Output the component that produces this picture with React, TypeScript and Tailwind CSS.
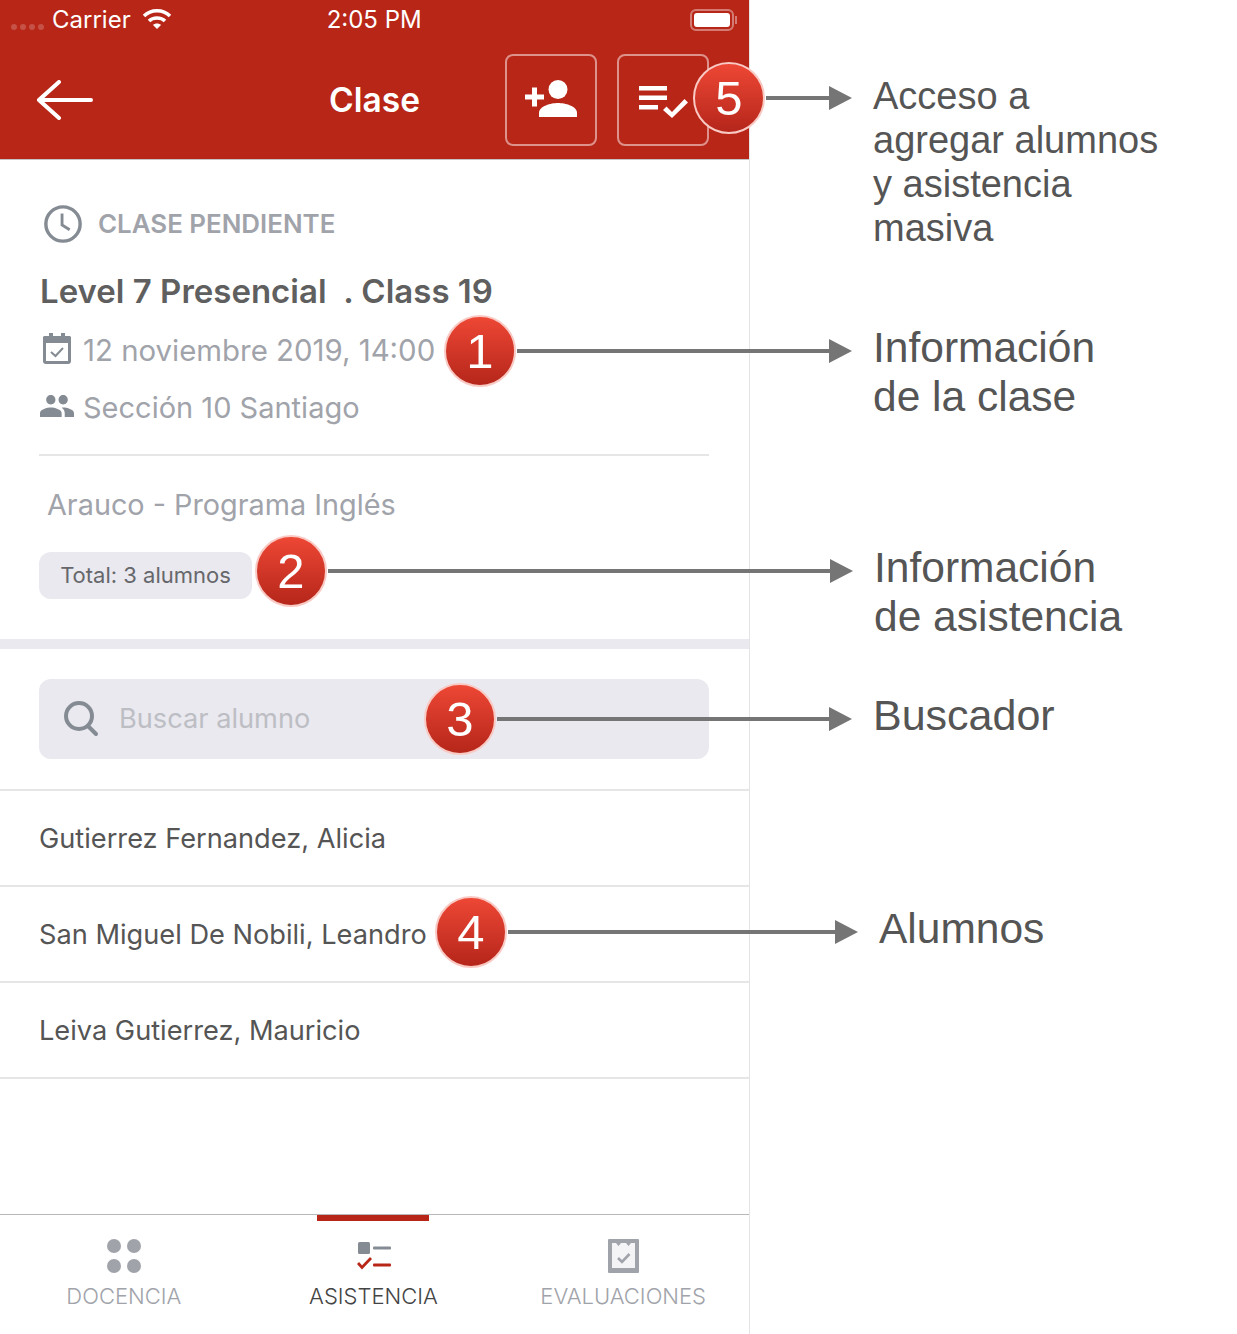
const APP_FONT = "font-['Inter','Liberation_Sans',sans-serif]";

const Badge = ({ n, className }: { n: number; className: string }) => (
  <div
    className={`absolute flex h-[72px] w-[72px] items-center justify-center rounded-full border-2 border-[#f9c9c4] bg-gradient-to-b from-[#ee4735] to-[#b5261a] font-['Liberation_Sans',sans-serif] text-[49px] leading-none text-white ${className}`}
  >
    {n}
  </div>
);

const Arrow = ({ className }: { className: string }) => (
  <div className={`absolute flex h-6 items-center ${className}`}>
    <div className="h-1 flex-1 bg-[#757575]" />
    <svg width="23" height="24" viewBox="0 0 23 24" className="shrink-0">
      <path d="M0 0 L23 12 L0 24 Z" fill="#757575" />
    </svg>
  </div>
);

const Callout = ({ lines, className }: { lines: string[]; className: string }) => (
  <div className={`absolute font-['Liberation_Sans',sans-serif] text-[#555] ${className}`}>
    {lines.map((l) => (
      <div key={l} className="whitespace-nowrap">
        {l}
      </div>
    ))}
  </div>
);

const StudentRow = ({ name }: { name: string }) => (
  <div className="flex h-24 items-center border-b-2 border-[#e6e6e6] pt-[2px] pl-[39px] text-[27.2px] text-[#555]">{name}</div>
);

const App = () => {
  return (
    <div className={`relative flex h-[1334px] w-[1237px] overflow-hidden bg-white ${APP_FONT}`}>
      <div className="flex w-[750px] flex-col border-r border-[#e4e4e4]">
        {/* header */}
        <div className="h-40 border-b border-[#c4c4c4] bg-[#b82618]">
          <div className="flex h-[40px] items-center text-[24px] text-white">
            <div className="ml-[11px] flex gap-[3px] pt-[14px]">
              <span className="h-[6px] w-[6px] rounded-full bg-white/20" />
              <span className="h-[6px] w-[6px] rounded-full bg-white/20" />
              <span className="h-[6px] w-[6px] rounded-full bg-white/20" />
              <span className="h-[6px] w-[6px] rounded-full bg-white/20" />
            </div>
            <span className="ml-[8px]">Carrier</span>
            <svg width="30" height="22" viewBox="0 0 30 22" className="ml-[11px]" fill="none" stroke="white" strokeWidth="3.5">
              <path d="M2 7 C9 0 21 0 28 7" />
              <path d="M7 12 C11 8 19 8 23 12" />
              <path d="M15 20 L11 16 C13 14 17 14 19 16 Z" fill="white" stroke="none" />
            </svg>
            <span className="ml-[155px]">2:05 PM</span>
            <div className="ml-auto mr-[12px] flex items-center">
              <div className="flex h-[22px] w-[44px] items-center rounded-[6px] border-2 border-white/40 p-[2px]">
                <div className="h-full w-full rounded-[3px] bg-white" />
              </div>
              <div className="ml-[1px] h-[8px] w-[2px] bg-white/40" />
            </div>
          </div>
          <div className="relative mt-[14px] flex items-center pr-10">
            <svg width="56" height="40" viewBox="0 0 56 40" fill="none" stroke="white" strokeWidth="4" strokeLinecap="round" className="ml-[37px]">
              <path d="M22 2 L2 20 L22 38 M2 20 H54" />
            </svg>
            <div className="absolute inset-x-0 text-center text-[33.5px] font-semibold text-white">Clase</div>
            <div className="ml-auto flex gap-5">
              <div className="flex h-[92px] w-[92px] items-center justify-center rounded-[8px] border-2 border-[#dd928b]">
                <svg width="52" height="37" viewBox="0 0 52 37" fill="white" className="mb-[3px]">
                  <circle cx="33" cy="9.5" r="9.5" />
                  <path d="M14 37 V33 C14 26 26 23 33 23 C40 23 52 26 52 33 V37 Z" />
                  <path d="M7 7.5 H12 V14.5 H19 V19.5 H12 V26.5 H7 V19.5 H0 V14.5 H7 Z" />
                </svg>
              </div>
              <div className="flex h-[92px] w-[92px] items-center justify-center rounded-[8px] border-2 border-[#dd928b]">
                <svg width="49" height="32" viewBox="0 0 49 32" fill="white" className="mt-1">
                  <rect x="0" y="0" width="28" height="4.5" />
                  <rect x="0" y="9.5" width="28" height="4.5" />
                  <rect x="0" y="19" width="19" height="4.5" />
                  <path d="M24 24 L27.5 20.5 L33 26 L45.5 13 L49 16.5 L33 32 Z" />
                </svg>
              </div>
            </div>
          </div>
        </div>

        {/* class info */}
        <div className="px-10">
          <div className="mt-[44px] flex h-10 items-center">
            <svg width="40" height="40" viewBox="0 0 42 42" fill="none" stroke="#858b93" strokeWidth="3.6" className="ml-[3px] shrink-0">
              <circle cx="21" cy="21" r="18" />
              <path d="M20 10 V22 L28 27" strokeWidth="3" />
            </svg>
            <span className="ml-[15px] text-[25.9px] font-semibold text-[#a1a3aa]">CLASE PENDIENTE</span>
          </div>
          <div className="mt-[26px] h-[42px] text-[33px] leading-[42px] font-semibold whitespace-pre text-[#5f5f5f]">
            Level 7 Presencial  . Class 19
          </div>
          <div className="mt-[18px] flex h-10 items-center text-[29.4px] text-[#a1a3aa]">
            <svg width="28" height="31" viewBox="0 0 28 31" className="mb-[3px] ml-[3px] shrink-0" fill="none">
              <path d="M1.5 5 H26.5 V28 Q26.5 29.5 25 29.5 H3 Q1.5 29.5 1.5 28 Z" stroke="#858b93" strokeWidth="3" />
              <rect x="1" y="3" width="26" height="7" fill="#858b93" />
              <rect x="6" y="0" width="4" height="5" fill="#858b93" />
              <rect x="18" y="0" width="4" height="5" fill="#858b93" />
              <path d="M8 19 L12.5 23 L20 15" stroke="#858b93" strokeWidth="2" />
            </svg>
            <span className="mt-[3px] ml-[12px] whitespace-nowrap">12 noviembre 2019, 14:00</span>
          </div>
          <div className="mt-4 flex h-10 items-center text-[29px] text-[#a1a3aa]">
            <svg width="34" height="22" viewBox="1 1 22 14" fill="#858b93" preserveAspectRatio="none" className="shrink-0">
              <path d="M16 7c1.66 0 2.99-1.34 2.99-3S17.66 1 16 1s-3 1.34-3 3 1.34 3 3 3zM8 7c1.66 0 2.99-1.34 2.99-3S9.66 1 8 1 5 2.34 5 4s1.34 3 3 3zm0 2c-2.33 0-7 1.17-7 3.5V15h14v-2.5C15 10.17 10.33 9 8 9zm8 0c-.29 0-.62.02-.97.05 1.16.84 1.97 1.97 1.97 3.45V15h6v-2.5C23 10.17 18.33 9 16 9z" />
            </svg>
            <span className="mt-[3px] ml-[9px]">Sección 10 Santiago</span>
          </div>
          <div className="mt-[28px] -ml-px h-[2px] bg-[#e6e6e6]" />
          <div className="mt-[29px] ml-[7px] h-10 text-[28.8px] leading-10 text-[#a1a3aa]">Arauco - Programa Inglés</div>
          <div className="mt-[27px] -ml-px flex h-[47px] w-[213px] items-center justify-center rounded-[12px] bg-[#e9e9ef] text-[22px] text-[#66676b]">
            Total: 3 alumnos
          </div>
        </div>

        <div className="mt-10 h-[10px] bg-[#e9e9ef]" />

        {/* search */}
        <div className="px-10 pt-[30px]">
          <div className="-ml-px flex h-20 items-center rounded-[12px] bg-[#e9e9ef] pl-6">
            <svg width="36" height="36" viewBox="0 0 36 36" fill="none" stroke="#858b93" strokeWidth="4" strokeLinecap="round" className="shrink-0">
              <circle cx="16" cy="15" r="13" />
              <path d="M26 26 L33 33" />
            </svg>
            <span className="ml-[20px] text-[27.2px] text-[#bdbec4]">Buscar alumno</span>
          </div>
        </div>

        {/* students */}
        <div className="mt-[30px] border-t-2 border-[#e6e6e6]">
          <StudentRow name="Gutierrez Fernandez, Alicia" />
          <StudentRow name="San Miguel De Nobili, Leandro" />
          <StudentRow name="Leiva Gutierrez, Mauricio" />
        </div>

        {/* tab bar */}
        <div className="mt-auto grid h-[120px] grid-cols-3 border-t border-[#b8b8b8] text-[22px] font-light text-[#a1a3aa]">
          <div className="flex flex-col items-center pt-[24px] pr-[2px]">
            <div className="grid h-[34px] grid-cols-2 gap-[6px]">
              <span className="h-[14px] w-[14px] rounded-full bg-[#a1a3aa]" />
              <span className="h-[14px] w-[14px] rounded-full bg-[#a1a3aa]" />
              <span className="h-[14px] w-[14px] rounded-full bg-[#a1a3aa]" />
              <span className="h-[14px] w-[14px] rounded-full bg-[#a1a3aa]" />
            </div>
            <span className="mt-[7px]">DOCENCIA</span>
          </div>
          <div className="relative flex flex-col items-center pt-[24px] pr-[2px] text-[#444]">
            <div className="absolute top-0 left-[67px] h-[6px] w-[112px] bg-[#b82618]" />
            <svg width="34" height="34" viewBox="0 0 34 34" className="ml-[2px]">
              <rect x="1" y="3" width="12" height="12" rx="1.5" fill="#858b93" />
              <rect x="16" y="7.5" width="18" height="3" rx="1" fill="#858b93" />
              <path d="M1 24 L5 28.5 L14 19" stroke="#b82618" strokeWidth="2.8" fill="none" />
              <rect x="16" y="24.5" width="18" height="3" rx="1" fill="#b82618" />
            </svg>
            <span className="mt-[7px]">ASISTENCIA</span>
          </div>
          <div className="flex flex-col items-center pt-[24px] pr-[2px]">
            <svg width="31" height="34" viewBox="0 0 31 34">
              <rect x="0" y="0" width="31" height="34" rx="1" fill="#a1a3aa" />
              <path d="M4 4 H8 L10.5 7 L13 4 H18 L20.5 7 L23 4 H27 V29 H4 Z" fill="#f4f4f6" />
              <path d="M10 19 L14 23 L21.5 15" stroke="#a1a3aa" strokeWidth="2.6" fill="none" />
            </svg>
            <span className="mt-[7px]">EVALUACIONES</span>
          </div>
        </div>
      </div>

      {/* annotations */}
      <Arrow className="left-[766px] top-[86px] w-[86px]" />
      <Arrow className="left-[517px] top-[339px] w-[335px]" />
      <Arrow className="left-[328px] top-[559px] w-[525px]" />
      <Arrow className="left-[497px] top-[707px] w-[355px]" />
      <Arrow className="left-[508px] top-[920px] w-[350px]" />

      <Badge n={5} className="left-[693px] top-[62px]" />
      <Badge n={1} className="left-[444px] top-[315px]" />
      <Badge n={2} className="left-[255px] top-[535px]" />
      <Badge n={3} className="left-[424px] top-[683px]" />
      <Badge n={4} className="left-[435px] top-[896px]" />

      <Callout lines={["Acceso a", "agregar alumnos", "y asistencia", "masiva"]} className="left-[873px] top-[74px] text-[38px] leading-[44px]" />
      <Callout lines={["Información", "de la clase"]} className="left-[873px] top-[323px] text-[42.5px] leading-[49px]" />
      <Callout lines={["Información", "de asistencia"]} className="left-[874px] top-[543px] text-[42.5px] leading-[49px]" />
      <Callout lines={["Buscador"]} className="left-[873px] top-[691px] text-[43px] leading-[49px]" />
      <Callout lines={["Alumnos"]} className="left-[879px] top-[904px] text-[42.5px] leading-[49px]" />
    </div>
  );
};

export default App;
